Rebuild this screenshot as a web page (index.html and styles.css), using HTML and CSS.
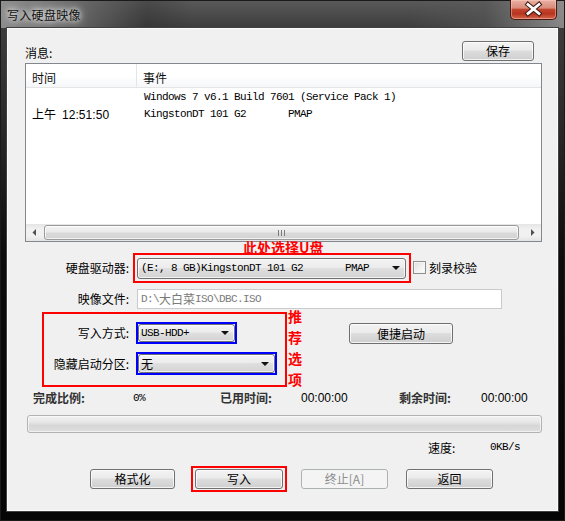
FILE: index.html
```html
<!DOCTYPE html>
<html lang="zh-CN">
<head>
<meta charset="utf-8">
<title>写入硬盘映像</title>
<link rel="stylesheet" href="styles.css">
</head>
<body>
<div class="window">
  <div class="titlebar">
    <span class="title">写入硬盘映像</span>
    <div class="close">
      <svg width="45" height="19" viewBox="0 0 45 19">
        <path d="M17 4.5 L28 13.5 M28 4.5 L17 13.5" stroke="#3b1710" stroke-width="4.8" stroke-linecap="square" fill="none"/>
        <path d="M17 4.5 L28 13.5 M28 4.5 L17 13.5" stroke="#ffffff" stroke-width="2.8" stroke-linecap="square" fill="none"/>
      </svg>
    </div>
  </div>
  <div class="client">
    <div class="row-msg">
      <span class="msg-lbl">消息:</span>
      <div class="btn btn-save">保存</div>
    </div>

    <div class="listbox">
      <div class="lv-head">
        <div class="col1">时间</div>
        <div class="col2">事件</div>
      </div>
      <div class="lv-body">
        <div class="lv-row"><div class="col1"></div><div class="col2 mono">Windows 7 v6.1 Build 7601 (Service Pack 1)</div></div>
        <div class="lv-row"><div class="col1 time">上午<span class="num time-num">12:51:50</span></div><div class="col2 mono">KingstonDT 101 G2       PMAP</div></div>
      </div>
      <div class="hscroll">
        <div class="sb-arrow"><svg width="5" height="7" viewBox="0 0 5 7"><path d="M4 0 L0.5 3.5 L4 7 Z" fill="#505050"/></svg></div>
        <div class="sb-thumb"><svg width="7" height="6" viewBox="0 0 7 6"><path d="M0.5 0 V6 M3.5 0 V6 M6.5 0 V6" stroke="#7a7a7a" stroke-width="1"/></svg></div>
        <div class="sb-arrow"><svg width="5" height="7" viewBox="0 0 5 7"><path d="M1 0 L4.5 3.5 L1 7 Z" fill="#505050"/></svg></div>
      </div>
    </div>

    <div class="row-drive">
      <span class="note-top">此处选择U盘</span>
      <div class="lbl-col">硬盘驱动器:</div>
      <div class="redbox redbox-drive">
        <div class="combo combo-drive"><span class="mono">(E:, 8 GB)KingstonDT 101 G2       PMAP</span><i class="caret"></i></div>
      </div>
      <div class="checkbox"></div>
      <span class="chk-lbl">刻录校验</span>
    </div>

    <div class="row-image">
      <div class="lbl-col">映像文件:</div>
      <div class="field"><span class="mono">D:\</span><span class="cjk">大白菜</span><span class="mono">ISO\DBC.ISO</span></div>
    </div>

    <div class="section">
      <div class="redbox redbox-opts">
        <div class="opt-row opt-row1">
          <div class="lbl-in">写入方式:</div>
          <div class="bluebox blue1"><div class="combo"><span class="mono">USB-HDD+</span><i class="caret"></i></div></div>
        </div>
        <div class="opt-row opt-row2">
          <div class="lbl-in">隐藏启动分区:</div>
          <div class="bluebox blue2"><div class="combo"><span class="cjk">无</span><i class="caret"></i></div></div>
        </div>
      </div>
      <div class="note-vert">推<br>荐<br>选<br>项</div>
      <div class="btn btn-quick">便捷启动</div>
    </div>

    <div class="status">
      <span class="st-lbl">完成比例:</span>
      <span class="mono">0%</span>
      <span class="st-lbl">已用时间:</span>
      <span class="num">00:00:00</span>
      <span class="st-lbl">剩余时间:</span>
      <span class="num">00:00:00</span>
    </div>

    <div class="progress"></div>

    <div class="speed">
      <span class="speed-lbl">速度:</span>
      <span class="mono">0KB/s</span>
    </div>

    <div class="actions">
      <div class="btn btn-format">格式化</div>
      <div class="redbox redbox-write"><div class="btn btn-write">写入</div></div>
      <div class="btn btn-stop disabled">终止[A]</div>
      <div class="btn btn-back">返回</div>
    </div>
  </div>
</div>
</body>
</html>
```

FILE: styles.css
```css
* { box-sizing: border-box; margin: 0; padding: 0; }
html, body { width: 565px; height: 521px; overflow: hidden; background: #000; }
body {
  font-family: "Noto Sans CJK SC", "Liberation Sans", sans-serif;
  font-size: 12px;
  color: #000;
}

.window {
  width: 565px;
  height: 521px;
  display: flex;
  flex-direction: column;
  background:
    linear-gradient(to right, rgba(150,150,150,.9) 0, rgba(110,110,110,.75) 14%, rgba(40,40,40,.3) 26%, rgba(0,0,0,0) 34%, rgba(0,0,0,0) 72%, rgba(90,90,90,.55) 86%, rgba(150,150,150,.85) 100%) top left / 100% 28px no-repeat,
    linear-gradient(to bottom, #5a5a5a 0, #3c3c3c 28px, #2a2a2a 120px, #0c0c0c 260px, #050505 100%);
  box-shadow: inset 0 0 0 1px #1a1a1a;
}

/* title bar */
.titlebar {
  height: 28px;
  display: flex;
  align-items: flex-start;
}
.title {
  margin-left: 7px;
  margin-top: 6px;
  line-height: 17px;
  font-size: 12px;
  letter-spacing: 0.3px;
  color: #111;
  text-shadow: 0 0 5px rgba(255,255,255,.95), 0 0 9px rgba(255,255,255,.7), 0 0 14px rgba(230,230,230,.6);
}
.close {
  margin-left: auto;
  margin-right: 8px;
  width: 47px;
  height: 20px;
  border: 1px solid #4a1910;
  border-top: none;
  border-radius: 0 0 5px 5px;
  background: linear-gradient(to bottom, #e9b0a3 0%, #d88c7b 42%, #c2452e 50%, #b8341f 72%, #d4664a 100%);
  box-shadow: inset 0 0 0 1px rgba(255,210,200,.45);
  display: flex;
  align-items: center;
  justify-content: center;
}

/* client area */
.client {
  margin-left: 7px;
  width: 551px;
  height: 483px;
  background: #f0f0f0;
  border: 1px solid #fbfbfb;
  box-shadow: 0 0 0 1px #404040;
  display: flex;
  flex-direction: column;
}

.mono {
  font-family: "Liberation Mono", monospace;
  font-size: 11px;
  letter-spacing: -0.6px;
  white-space: pre;
}
.cjk {
  font-family: "Noto Sans CJK SC", sans-serif;
  font-size: 12px;
}
.num {
  font-family: "Liberation Sans", sans-serif;
  font-size: 12px;
}

/* buttons */
.btn {
  height: 20px;
  border: 1px solid #707070;
  border-radius: 3px;
  background: linear-gradient(to bottom, #f3f3f3 0%, #ebebeb 45%, #dddddd 50%, #cfcfcf 100%);
  box-shadow: inset 0 0 0 1px rgba(255,255,255,.75);
  display: flex;
  align-items: center;
  justify-content: center;
  line-height: 18px;
  font-size: 12px;
  color: #000;
}
.btn.disabled {
  border-color: #adb2b5;
  background: #f4f4f4;
  box-shadow: none;
  color: #8d8d8d;
}

/* message row */
.row-msg {
  margin-top: 12px;
  height: 20px;
  padding-left: 17px;
  padding-right: 23px;
  display: flex;
  align-items: center;
  justify-content: space-between;
}
.msg-lbl { line-height: 16px; padding-top: 4px; }
.btn-save { width: 72px; }

/* listbox */
.listbox {
  margin-top: 2px;
  margin-left: 17px;
  width: 517px;
  height: 179px;
  border: 1px solid #828790;
  background: #fff;
  display: flex;
  flex-direction: column;
}
.lv-head {
  height: 24px;
  display: flex;
  border-bottom: 1px solid #e5e5e5;
  background: linear-gradient(to bottom, #ffffff 0%, #ffffff 50%, #f6f7f8 100%);
}
.lv-head .col1, .lv-head .col2 { line-height: 23px; padding-top: 2px; color: #111; }
.lv-head .col1 { border-right: 1px solid #e3e5e7; }
.col1 { width: 111px; padding-left: 6px; flex: none; }
.col2 { padding-left: 6px; }
.lv-body { flex: 1; padding-top: 1px; }
.lv-row { height: 17px; display: flex; align-items: center; line-height: 17px; }
.lv-row .col1 { padding-left: 6px; }
.lv-row .col2 { padding-left: 7px; }
.time { white-space: pre; }
.time-num { margin-left: 6px; letter-spacing: 0.05px; }

.hscroll {
  height: 17px;
  display: flex;
  background: linear-gradient(to bottom, #e4e4e4 0%, #f1f1f1 30%, #f1f1f1 70%, #e4e4e4 100%);
}
.sb-arrow {
  width: 17px;
  flex: none;
  display: flex;
  align-items: center;
  justify-content: center;
}
.sb-thumb {
  flex: 1;
  margin: 1px 5px 1px 1px;
  border: 1px solid #9a9a9a;
  border-radius: 3px;
  background: linear-gradient(to bottom, #f4f4f4 0%, #e9e9e9 48%, #dadada 52%, #d2d2d2 100%);
  box-shadow: inset 0 0 0 1px rgba(255,255,255,.7);
  display: flex;
  align-items: center;
  justify-content: center;
}

/* drive row */
.row-drive {
  margin-top: 11px;
  height: 30px;
  display: flex;
  align-items: center;
  position: relative;
}
.note-top {
  position: absolute;
  left: 235px;
  top: -13px;
  font-size: 14px;
  font-weight: bold;
  line-height: 14px;
  color: #ff0000;
}
.lbl-col {
  width: 121px;
  text-align: right;
  flex: none;
  line-height: 16px;
}
.redbox { border: 2px solid #ff0000; }
.redbox-drive {
  margin-left: 4px;
  width: 278px;
  height: 30px;
  padding: 0 2px;
  display: flex;
  align-items: center;
}
.combo {
  height: 21px;
  width: 100%;
  border: 1px solid #707070;
  border-radius: 3px;
  background: linear-gradient(to bottom, #f3f3f3 0%, #ececec 45%, #dfdfdf 50%, #d3d3d3 100%);
  box-shadow: inset 0 0 0 1px rgba(255,255,255,.7);
  display: flex;
  align-items: center;
  padding-left: 3px;
  padding-right: 5px;
  line-height: 17px;
}
.caret {
  margin-left: auto;
  width: 0;
  height: 0;
  border-left: 4px solid transparent;
  border-right: 4px solid transparent;
  border-top: 4px solid #111;
}
.combo-drive { width: 269px; }
.checkbox {
  margin-left: 2px;
  width: 13px;
  height: 13px;
  border: 1px solid #8e8f8f;
  background: linear-gradient(135deg, #dcdcdc 0%, #f4f4f4 60%, #ffffff 100%);
  box-shadow: inset 0 0 0 1px #f4f4f4;
  margin-top: -2px;
}
.chk-lbl { margin-left: 3px; font-size: 12px; line-height: 16px; }

/* image file row */
.row-image {
  margin-top: 6px;
  height: 20px;
  display: flex;
  align-items: center;
}
.field {
  margin-left: 8px;
  width: 365px;
  height: 20px;
  border: 1px solid #c9cbce;
  background: #fff;
  padding-left: 3px;
  display: flex;
  align-items: center;
  color: #7a7a7a;
  line-height: 16px;
}

/* options section */
.section {
  margin-top: 3px;
  height: 75px;
  padding-left: 34px;
  display: flex;
  align-items: flex-start;
}
.redbox-opts {
  width: 245px;
  height: 75px;
  flex: none;
}
.opt-row { display: flex; align-items: center; }
.opt-row1 { margin-top: 8px; height: 22px; }
.opt-row2 { margin-top: 8px; height: 23px; }
.lbl-in { width: 85px; text-align: right; line-height: 16px; flex: none; }
.bluebox { margin-left: 7px; border: 2px solid #0000ff; height: 100%; }
.blue1 { width: 101px; }
.blue2 { width: 141px; }
.bluebox .combo { height: 100%; padding-left: 2px; }
.note-vert {
  margin-left: 1px;
  margin-top: -6px;
  width: 15px;
  font-size: 14px;
  font-weight: bold;
  line-height: 21px;
  color: #ff0000;
}
.btn-quick {
  margin-left: 46px;
  margin-top: 11px;
  width: 104px;
  height: 21px;
}

/* status */
.status {
  margin-top: 3px;
  height: 16px;
  padding-left: 25px;
  display: grid;
  grid-template-columns: 100px 87px 81px 98px 82px auto;
  align-items: center;
  line-height: 16px;
}
.st-lbl { font-weight: bold; color: #333; }

.progress {
  margin-top: 9px;
  margin-left: 19px;
  width: 515px;
  height: 18px;
  border: 1px solid #b2b2b2;
  border-radius: 3px;
  background: linear-gradient(to bottom, #f2f2f2 0%, #e6e6e6 40%, #d6d6d6 60%, #dedede 100%);
  box-shadow: inset 0 0 0 1px rgba(255,255,255,.6);
}

.speed {
  margin-top: 8px;
  height: 13px;
  padding-left: 420px;
  display: flex;
  align-items: center;
  line-height: 13px;
}
.speed-lbl { width: 62px; }

/* action buttons */
.actions {
  margin-top: 12px;
  height: 26px;
  padding-left: 82px;
  display: flex;
  align-items: center;
}
.btn-format { width: 85px; }
.redbox-write {
  margin-left: 16px;
  width: 96px;
  height: 26px;
  padding: 0 2px;
  display: flex;
  align-items: center;
}
.btn-write { width: 88px; }
.btn-stop { margin-left: 14px; width: 87px; }
.btn-back { margin-left: 18px; width: 87px; }
```
